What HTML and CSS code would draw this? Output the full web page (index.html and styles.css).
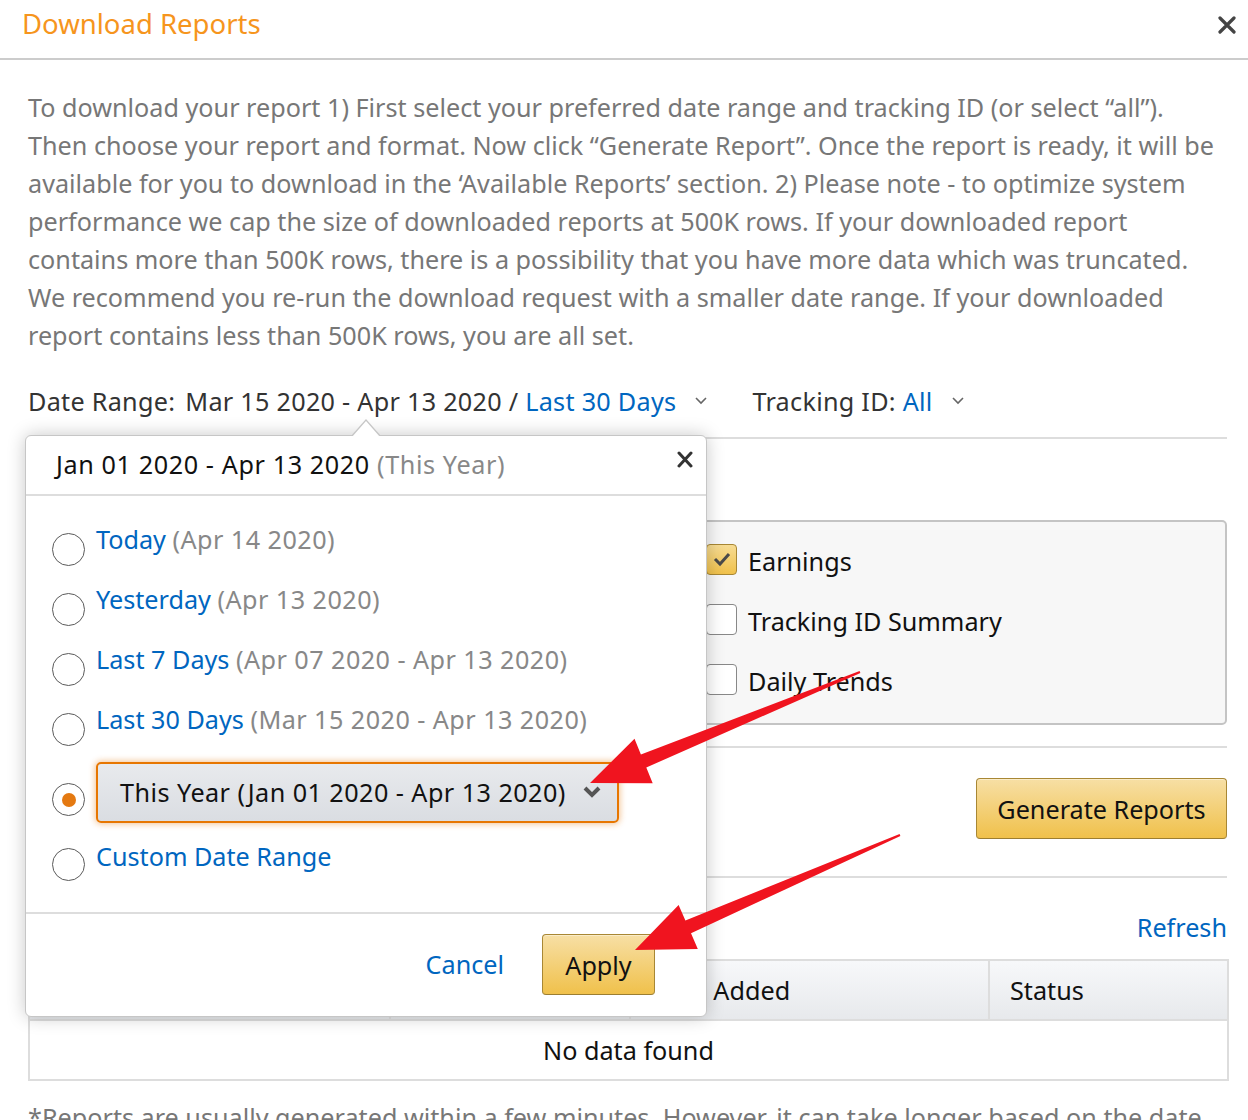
FILE: index.html
```html
<!DOCTYPE html>
<html lang="en">
<head>
<meta charset="utf-8">
<title>Download Reports</title>
<link rel="stylesheet" href="styles.css">
</head>
<body>
<div class="page">
  <header class="mhead">
    <h1 class="title">Download Reports</h1>
    <button class="close" aria-label="Close">
      <svg width="18" height="18" viewBox="0 0 18 18"><path d="M2 2 L16 16 M16 2 L2 16" stroke="#444" stroke-width="3.2" stroke-linecap="round" fill="none"/></svg>
    </button>
  </header>

  <main class="mbody">
    <p class="intro">To download your report 1) First select your preferred date range and tracking ID (or select “all”).<br>Then choose your report and format. Now click “Generate Report”. Once the report is ready, it will be<br>available for you to download in the ‘Available Reports’ section. 2) Please note - to optimize system<br>performance we cap the size of downloaded reports at 500K rows. If your downloaded report<br>contains more than 500K rows, there is a possibility that you have more data which was truncated.<br>We recommend you re-run the download request with a smaller date range. If your downloaded<br>report contains less than 500K rows, you are all set.</p>

    <div class="filters">
      <span class="flabel">Date Range:</span>
      <span class="fval">Mar 15 2020 - Apr 13 2020 / <a class="link">Last 30 Days</a></span>
      <svg class="chev" width="12" height="8" viewBox="0 0 12 8"><polyline points="1,1 6,6 11,1" fill="none" stroke="#666" stroke-width="1.6"/></svg>
      <span class="fval tracking">Tracking ID: <a class="link">All</a></span>
      <svg class="chev" width="12" height="8" viewBox="0 0 12 8"><polyline points="1,1 6,6 11,1" fill="none" stroke="#666" stroke-width="1.6"/></svg>
    </div>

    <hr class="rule rule-top">

    <section class="types">
      <div class="types-label"></div>
      <div class="types-box">
        <label class="cb-row"><span class="cb checked"><svg width="20" height="16" viewBox="0 0 20 16"><polyline points="3,8 8,13 17,3" fill="none" stroke="#4a4a4a" stroke-width="3"/></svg></span>Earnings</label>
        <label class="cb-row"><span class="cb"></span>Tracking ID Summary</label>
        <label class="cb-row"><span class="cb"></span>Daily Trends</label>
      </div>
    </section>

    <hr class="rule rule-mid">

    <div class="gen-row"><button class="gold gen">Generate Reports</button></div>

    <hr class="rule rule-low">

    <div class="refresh-row"><a class="link">Refresh</a></div>

    <table class="reports">
      <colgroup><col class="c1"><col class="c2"><col class="c3"><col class="c4"></colgroup>
      <thead>
        <tr><th></th><th></th><th>Date Added</th><th>Status</th></tr>
      </thead>
      <tbody>
        <tr><td colspan="4">No data found</td></tr>
      </tbody>
    </table>

    <p class="note">*Reports are usually generated within a few minutes. However, it can take longer based on the date</p>
  </main>

  <div class="popover">
    <div class="pop-head">
      <div class="pop-range">Jan 01 2020 - Apr 13 2020 <span class="muted">(This Year)</span></div>
      <button class="pop-close" aria-label="Close">
        <svg width="16" height="17" viewBox="0 0 16 17"><path d="M2 2 L14 15 M14 2 L2 15" stroke="#333" stroke-width="3" stroke-linecap="round" fill="none"/></svg>
      </button>
    </div>
    <div class="pop-body">
      <div class="opt"><span class="radio"></span><span class="opt-label"><a class="link">Today</a> <span class="muted">(Apr 14 2020)</span></span></div>
      <div class="opt"><span class="radio"></span><span class="opt-label"><a class="link">Yesterday</a> <span class="muted">(Apr 13 2020)</span></span></div>
      <div class="opt"><span class="radio"></span><span class="opt-label"><a class="link">Last 7 Days</a> <span class="muted">(Apr 07 2020 - Apr 13 2020)</span></span></div>
      <div class="opt"><span class="radio"></span><span class="opt-label"><a class="link">Last 30 Days</a> <span class="muted">(Mar 15 2020 - Apr 13 2020)</span></span></div>
      <div class="opt opt-sel"><span class="radio on"></span>
        <div class="select"><span class="sel-text">This Year (Jan 01 2020 - Apr 13 2020)</span>
          <svg width="18" height="12" viewBox="0 0 18 12"><polyline points="2,2 9,9 16,2" fill="none" stroke="#555" stroke-width="4"/></svg>
        </div>
      </div>
      <div class="opt opt-custom"><span class="radio"></span><span class="opt-label"><a class="link">Custom Date Range</a></span></div>
    </div>
    <div class="pop-foot">
      <a class="link cancel">Cancel</a>
      <button class="gold apply">Apply</button>
    </div>
  </div>

  <svg class="arrows" width="1248" height="1120" viewBox="0 0 1248 1120">
    <polygon fill="#f0141f" points="590,783 652.7,783.2 646.3,767.5 860.4,673 859.6,671 640.9,754.5 634.5,738.8"/>
    <polygon fill="#f0141f" points="635,950 697.8,948.9 691,933.3 900.4,835.9 899.6,834.1 685.4,920.5 678.6,904.9"/>
  </svg>
</div>
</body>
</html>
```
FILE: styles.css
```css
*{box-sizing:border-box;}
html,body{margin:0;padding:0;overflow:hidden;background:#fff;}
body{font-family:"Noto Sans","Open Sans",sans-serif;font-size:25.2px;color:#111;}
.page{position:relative;width:1248px;height:1120px;overflow:hidden;}

.mhead{height:60px;border-bottom:2px solid #ccc;padding:0 12px 0 22px;display:flex;justify-content:space-between;align-items:flex-start;}
.title{margin:0;padding-top:4px;font-size:27.5px;line-height:40px;font-weight:400;color:#f6951d;}
.close,.pop-close{border:0;background:none;padding:0;margin:0;display:block;line-height:0;}
.close{margin-top:16px;}

.mbody{padding:28px 21px 0 28px;}
.intro{margin:0;line-height:38px;color:#777;white-space:nowrap;}

.filters{margin-top:28px;height:38px;display:flex;align-items:center;line-height:38px;color:#333;white-space:nowrap;letter-spacing:0.28px;}
.flabel{margin-right:10px;}
.chev{margin-left:19px;flex:none;}
.tracking{margin-left:45px;}
.link{color:#0066c0;text-decoration:none;}
.muted{color:#888;}

.rule{border:0;height:2px;background:#ddd;margin:0;}
.rule-top{margin-top:17px;}

.types{margin-top:81px;display:grid;grid-template-columns:1fr 547px;}
.types-box{background:#f7f7f7;border:2px solid #c4c4c4;border-radius:5px;padding:20px 20px 23px 24px;display:flex;flex-direction:column;gap:22px;}
.cb-row{display:flex;align-items:center;gap:11px;height:38px;line-height:38px;color:#111;}
.cb{width:31px;height:31px;flex:none;border:1.5px solid #888;border-radius:4px;background:#fff;margin-bottom:4px;display:flex;align-items:center;justify-content:center;}
.cb.checked{background:linear-gradient(#f7dc93,#f0c14b);border-color:#a88734;}

.rule-mid{margin-top:21px;}
.gen-row{display:flex;justify-content:flex-end;margin-top:30px;}
.gold{font-family:inherit;font-size:25.2px;color:#111;border:1.5px solid #a88734;border-bottom-color:#9c7e31;border-radius:4px;background:linear-gradient(#f7dfa5,#f0c14b);box-shadow:0 1px 0 rgba(255,255,255,.4) inset;padding:0;}
.gen{width:251px;height:61px;}
.rule-low{margin-top:37px;}
.refresh-row{margin-top:30px;text-align:right;line-height:38px;}

.reports{margin-top:13px;width:100%;border-collapse:collapse;table-layout:fixed;}
.c1{width:361px;}.c2{width:240px;}.c3{width:359px;}.c4{width:239px;}
.reports th,.reports td{border:2px solid #ddd;height:60px;padding:0 20px;font-weight:400;}
.reports th{text-align:left;color:#111;background:linear-gradient(#f7f8fa,#e7e9ec);}
.reports td{text-align:center;color:#111;}
.note{margin:17px 0 0;line-height:38px;color:#777;white-space:nowrap;}

.popover{position:absolute;left:25px;top:435px;width:682px;background:#fff;border:1px solid #c6c6c6;border-radius:6px;box-shadow:0 0 18px rgba(0,0,0,.22);}
.popover::before{content:"";position:absolute;left:325px;top:-17px;border-left:15px solid transparent;border-right:15px solid transparent;border-bottom:17px solid #c6c6c6;}
.popover::after{content:"";position:absolute;left:326px;top:-15px;border-left:14px solid transparent;border-right:14px solid transparent;border-bottom:16px solid #fff;}
.pop-head{height:60px;border-bottom:2px solid #ddd;padding:9px 13px 0 30px;display:flex;justify-content:space-between;align-items:flex-start;}
.pop-range{line-height:38px;color:#111;letter-spacing:0.6px;}
.pop-close{margin-top:6px;}
.pop-body{padding:24px 0 37px 26px;}
.opt{display:flex;align-items:flex-start;gap:11px;height:60px;}
.opt-label{line-height:38px;white-space:nowrap;}
.opt-label .muted{letter-spacing:0.45px;}
.radio{width:33px;height:33px;flex:none;border:1.5px solid #5a5a5a;border-radius:50%;margin-top:12.5px;position:relative;background:#fff;}
.radio.on::after{content:"";position:absolute;left:50%;top:50%;width:14px;height:14px;margin:-7px 0 0 -7px;border-radius:50%;background:#e47911;}
.opt-sel{height:auto;margin-top:2px;}
.opt-sel .radio{margin-top:21px;}
.select{width:523px;height:61px;display:flex;align-items:center;justify-content:space-between;padding:0 16px 1px 22px;border:2px solid #e77600;border-radius:5px;background:linear-gradient(#e8eaed,#dadde2);box-shadow:0 0 6px 1px rgba(228,121,17,.45);color:#111;white-space:nowrap;}
.sel-text{letter-spacing:0.45px;}
.opt-custom{height:38px;margin-top:14px;}
.opt-custom .radio{margin-top:11px;}
.pop-foot{border-top:2px solid #ddd;padding:20px 51px 21px 0;display:flex;justify-content:flex-end;align-items:center;gap:38px;}
.cancel{margin-bottom:2px;}
.apply{width:113px;height:61px;}

.arrows{position:absolute;left:0;top:0;pointer-events:none;}
```
